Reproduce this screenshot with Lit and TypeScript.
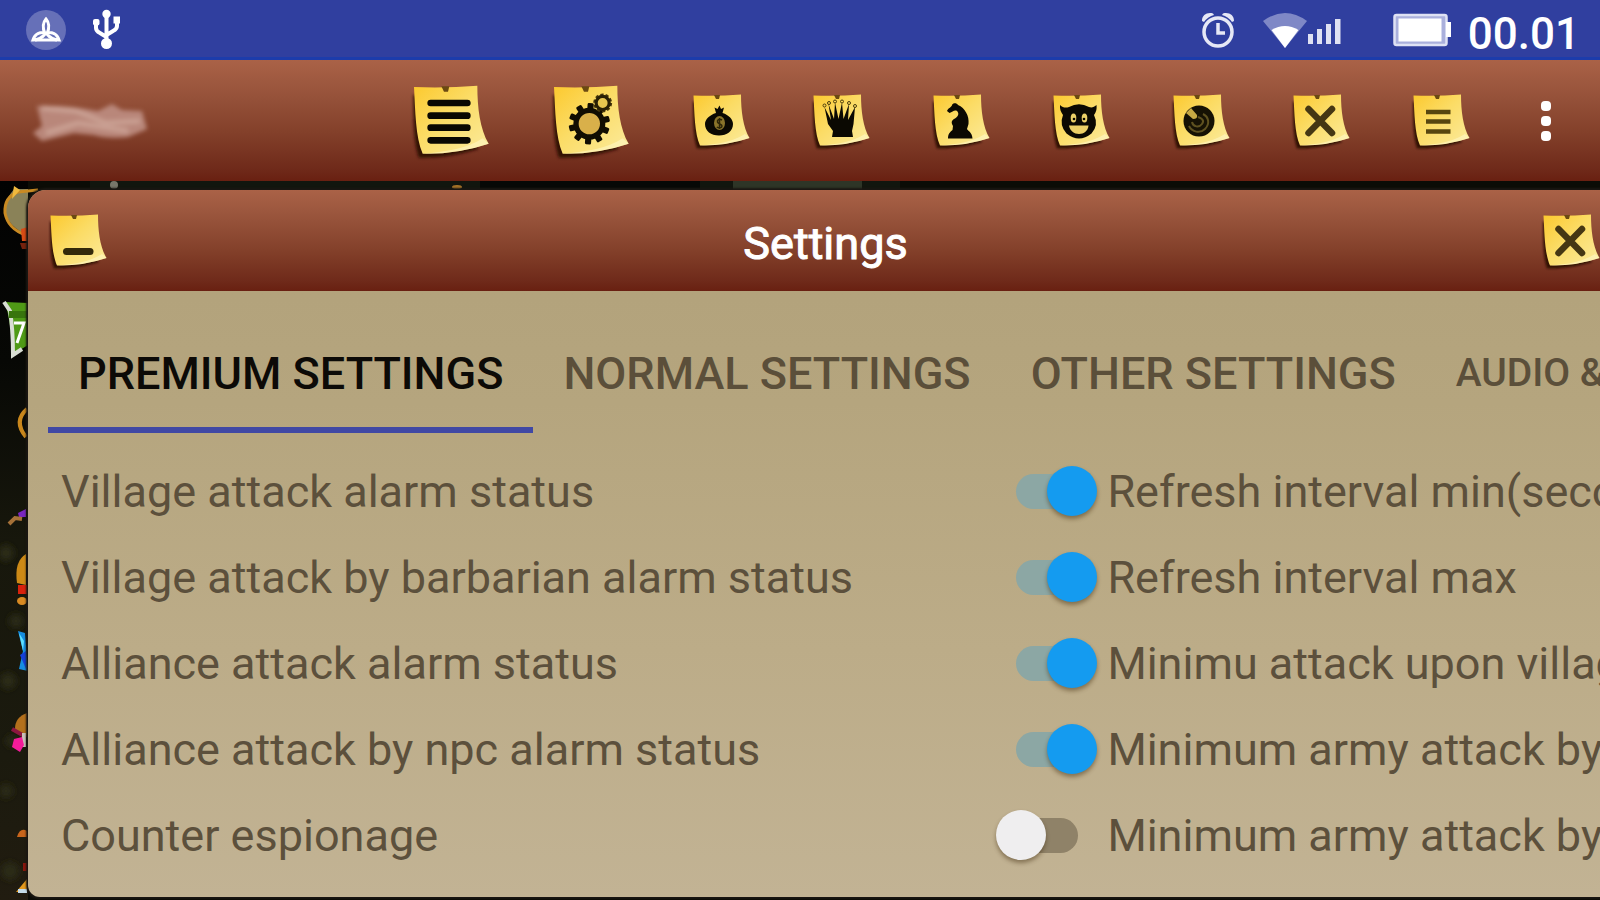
import { LitElement, html, svg, css } from "lit";
import { customElement, property, state } from "lit/decorators.js";

const teeth = (cx: number, cy: number, r: number, n: number, w: number) =>
  Array.from({ length: n }, (_, i) => svg`
    <rect x=${cx - w / 2} y=${cy - r} width=${w} height=${w} rx="1"
      transform="rotate(${(360 / n) * i + 4} ${cx} ${cy})"></rect>`);

const glyphs: Record<string, unknown> = {
  list: svg`<path d="M14 16.5H41.500M14 26H41.500M14 35H41.500M14 44.5H41.500" stroke="#0a0802" stroke-width="5" stroke-linecap="round"/>`,
  gears: svg`
    <g fill="#110d02">${teeth(28, 32, 15.5, 10, 4.6)}</g>
    <circle cx="28" cy="32" r="10" fill="#d9b04a" stroke="#110d02" stroke-width="4"/>
    <circle cx="38" cy="16.5" r="6.2" fill="none" stroke="#4a3a0c" stroke-width="1.800" stroke-dasharray="2.400 1.500"/>
    <circle cx="38" cy="16.5" r="4.900" fill="#e8c650" stroke="#2a2005" stroke-width="2.400"/>`,
  bag: svg`
    <path d="M24 22L22.500 16.500L25.500 18L27.500 14.500L29 18L32 16.500L30.500 22C37 24 41 28.500 41 33C41 40 35 44.500 27 44.500S13 40 13 33C13 28.500 17.500 24 24 22Z" fill="#0b0902"/>
    <ellipse cx="27.500" cy="32" rx="5.500" ry="7" fill="#8a742a"/>
    <path d="M30 29C27 27.500 25 29 25.500 31S30 33 30 35S27 37.500 24.800 36M27.500 27V38" fill="none" stroke="#2d2508" stroke-width="1.500"/>`,
  queen: svg`
    <path d="M20 46L21 40L16 33L12.500 16L19 29L16.500 13L22 28L23 11.500L26.500 28L30 11.500L31.500 28L37 13L36 29L43 16L41.500 33L40 40L41 46Z" fill="#0b0902"/>
    <g fill="none" stroke="#4a3c0c" stroke-width="1"><circle cx="12.500" cy="14.500" r="1.500"/><circle cx="17" cy="12" r="1.500"/><circle cx="23" cy="10.500" r="1.500"/><circle cx="30" cy="10.500" r="1.500"/><circle cx="37" cy="12" r="1.500"/><circle cx="43" cy="15" r="1.500"/></g>`,
  bishop: svg`<path d="M15 20C16 17 20 16 20 14C21 11.500 25 12 26 14C33 17 37.500 25 36.500 33L35 38C36 40 40 41 40.500 47.500H16C16 43 18 41 20.500 39L21 35C18.500 31 20 29 23 27.500C27 25 27 22 25 20C22 18.500 20.500 21.500 17.500 22Z" fill="#0b0902"/>`,
  devil: svg`
    <path d="M8 14C11 17 14 17 17 16Q27 10.500 37 16C40 17 42 16 44.500 14C45 19 44 21 42 24Q47 34 39.500 42.500Q27 52.500 14.500 42.500Q7 34 11 24C9 21 7.500 18 8 14Z" fill="#0b0902"/>
    <ellipse cx="21.500" cy="27" rx="2.800" ry="4.500" fill="#ecd067"/><ellipse cx="32.500" cy="27" rx="2.800" ry="4.500" fill="#ecd067"/>
    <circle cx="22" cy="28" r="1.300" fill="#0b0902"/><circle cx="32" cy="28" r="1.300" fill="#0b0902"/>
    <path d="M17 34.500H36.500C36 40 32 43 27 43S18 40 17 34.500Z" fill="#ecd067"/>`,
  ball: svg`
    <circle cx="27" cy="30" r="15.500" fill="#161204"/>
    <path d="M14 22L19 17L25 24Q26 28 21 28Z" fill="#c7a944"/>
    <path d="M17 35C20 41 28 43 33 38S37 26 31 23M20 31C21 36 27 37 30 33S29 27 26 26" fill="none" stroke="#5f5220" stroke-width="2"/>`,
  cross: svg`<path d="M16.500 18L40 42M40 18L16.500 42" stroke="#453713" stroke-width="6.500" stroke-linecap="round"/>`,
  lines: svg`<path d="M14 21H38.500M14 30.500H38.500M14 40.500H38.500" stroke="#57460f" stroke-width="4.500"/>`,
  minus: svg`<path d="M17.500 40.500H41" stroke="#33290a" stroke-width="7" stroke-linecap="round"/>`,
};

@customElement("sticky-note")
class StickyNote extends LitElement {
  @property() glyph = "lines";

  static styles = css`
    :host { display: block; aspect-ratio: 1; }
    .art { display: block; width: 100%; height: 100%; overflow: visible; }
  `;

  render() {
    return html`<svg class="art" viewBox="0 0 60 60" aria-hidden="true">
      <defs>
        <linearGradient id="paper" x1="0" y1="0" x2="1" y2="1">
          <stop offset="0" stop-color="#fcc92e"/><stop offset=".45" stop-color="#fbdc66"/><stop offset="1" stop-color="#fbeb9e"/>
        </linearGradient>
        <filter id="soft" x="-20%" y="-20%" width="140%" height="140%"><feGaussianBlur stdDeviation="1.200"/></filter>
      </defs>
      <path d="M1 10C1 30 1 46 5 57.500C20 58 34 55.500 50 51L30 30Z" fill="#2a0f06" opacity=".9" filter="url(#soft)"/>
      <path d="M1.500 4.500Q25 5.500 49 3.500C49 20 51 36 57.500 47Q34 55 8 54.500C2.500 42 2.500 22 1.500 4.500Z" fill="url(#paper)"/>
      <path d="M57.500 47Q34 55 8 54.500C24 53.500 42 50.500 53 43Z" fill="#fff6c4" opacity=".6"/>
      <path d="M22 4L28 4L27 8H24Z" fill="#6b4a12"/>
      ${glyphs[this.glyph]}
    </svg>`;
  }
}

const tools = [
  { glyph: "list", label: "Menu", big: true },
  { glyph: "gears", label: "Settings", big: true },
  { glyph: "bag", label: "Resources" },
  { glyph: "queen", label: "Alliance" },
  { glyph: "bishop", label: "Heroes" },
  { glyph: "devil", label: "Barbarians" },
  { glyph: "ball", label: "World" },
  { glyph: "cross", label: "Close" },
  { glyph: "lines", label: "Log" },
];

const tabs = [
  { text: "Premium settings" },
  { text: "Normal settings" },
  { text: "Other settings" },
  { text: "Audio & notifications", small: true },
];

@customElement("app-root")
class AppRoot extends LitElement {
  @state() private tab = 0;
  @state() private rows = [
    { label: "Village attack alarm status", on: true, next: "Refresh interval min(seconds)" },
    { label: "Village attack by barbarian alarm status", on: true, next: "Refresh interval max" },
    { label: "Alliance attack alarm status", on: true, next: "Minimu attack upon village" },
    { label: "Alliance attack by npc alarm status", on: true, next: "Minimum army attack by" },
    { label: "Counter espionage", on: false, next: "Minimum army attack by" },
  ];

  static styles = css`
    :host {
      display: flex; flex-direction: column; height: 100vh; overflow: hidden;
      background: #0b0c06; font-family: Roboto, "Liberation Sans", sans-serif;
      --wood: linear-gradient(#aa6247, #96523a 30%, #83402a 60%, #6f2a1a 90%, #692011);
    }
    * { box-sizing: border-box; }
    button { border: 0; padding: 0; margin: 0; background: none; font: inherit; color: inherit; cursor: pointer; }
    .status {
      flex: none; height: 60px; display: flex; align-items: center; padding: 0 20px 0 24px;
      background: #303f9f; border-bottom: 3px solid #1c3cab; color: #fff;
    }
    .status svg { display: block; flex: none; }
    .usb { margin-left: 24px; }
    .alarm { margin-left: auto; }
    .wifi { margin-left: 26px; }
    .battery { margin-left: 50px; }
    .clock { margin-left: 16px; font-size: 44px; line-height: 48px; font-weight: 500; padding-top: 10px; }
    .bar { flex: none; height: 121px; display: flex; align-items: center; padding: 0 10px 0 28px; background: var(--wood); }
    .smudge { margin-right: auto; overflow: visible; }
    .tool { width: 120px; height: 100%; display: grid; place-items: center; }
    .tool.big { width: 140px; }
    .note { width: 60px; }
    .big .note { width: 80px; }
    .more { width: 88px; height: 100%; display: grid; place-items: center; }
    .stage { flex: 1; min-height: 0; position: relative; display: flex; padding: 9px 0 3px 28px; }
    .scene { position: absolute; left: 0; top: 0; }
    .dialog {
      position: relative; flex: 1; margin-right: -20px; display: flex; flex-direction: column;
      border-radius: 18px 18px 12px 12px; overflow: hidden;
      background: linear-gradient(#b1a17a, #b5a57e 30%, #bcac88 65%, #c2b394);
      box-shadow: 0 0 2px 2px #1b1712;
    }
    .head { flex: none; height: 101px; display: grid; grid-template-columns: 60px 1fr 60px; align-items: center; padding: 0 18px 0 21px; background: var(--wood); }
    .title { margin: 0; padding-top: 6px; text-align: center; color: #fff; font-size: 45px; line-height: 52px; font-weight: 400; -webkit-text-stroke: 1px #fff; }
    .tabs { flex: none; display: flex; padding: 28px 0 0 20px; }
    .tab { flex: none; height: 114px; padding: 0 30px; border-bottom: 6px solid transparent; font-size: 45px; font-weight: 500; color: #5b4f3a; text-transform: uppercase; white-space: nowrap; }
    .tab.small { font-size: 39px; }
    .tab.current { color: #0c0a07; border-color: #4048a4; }
    .list { margin: 0; padding: 15px 0 0 33px; list-style: none; }
    .row { display: grid; grid-template-columns: 60% 111px 1fr; align-items: center; height: 86px; font-size: 45px; line-height: 52px; color: #5c503c; white-space: nowrap; }
    .row label, .row span { padding-top: 2px; }
    .switch { appearance: none; margin: 0; width: 101px; height: 50px; display: grid; align-items: center; cursor: pointer; }
    .switch::before { content: ""; grid-area: 1 / 1; justify-self: center; width: 62px; height: 35px; border-radius: 18px; background: #8f8268; }
    .switch::after { content: ""; grid-area: 1 / 1; justify-self: start; width: 50px; height: 50px; border-radius: 50%; background: #efeeef; box-shadow: 0 3px 4px rgba(60, 40, 10, .45); }
    .switch:checked::before { background: #8ca7a4; }
    .switch:checked::after { justify-self: end; background: #149bf0; }
  `;

  private toggle(i: number) {
    this.rows = this.rows.map((r, n) => (n === i ? { ...r, on: !r.on } : r));
  }

  render() {
    return html`
      <header class="status">
        <svg width="44" height="44" viewBox="0 0 44 44" aria-hidden="true">
          <circle cx="22" cy="23" r="20" fill="#6670b8"/>
          <g fill="none" stroke="#fff" stroke-width="3">
            <path d="M22 12C25.500 16 26 20 23 27C26 31 31 33 35 33C33 27 28 24.500 22 26C16 24.500 11 27 9 33C13 33 18 31 21 27C18 20 18.500 16 22 12Z"/>
            <path d="M11 33H33"/>
          </g>
        </svg>
        <svg class="usb" width="28" height="44" viewBox="0 0 28 44" aria-hidden="true">
          <g fill="none" stroke="#fff" stroke-width="4">
            <path d="M14.500 8V38M4 15V21Q4 24 8 26L14.500 30M25 13V19Q25 22 21 24L14.500 28"/>
          </g>
          <circle cx="14.500" cy="7" r="4.200" fill="#fff"/>
          <rect x="1" y="12" width="6.500" height="6.500" rx="2" fill="#fff"/><rect x="21.500" y="9.500" width="6.500" height="7" fill="#fff"/>
          <circle cx="14.500" cy="36.500" r="5.500" fill="#fff"/>
        </svg>
        <svg class="alarm" width="36" height="40" viewBox="0 0 36 40" aria-hidden="true">
          <g fill="none" stroke="#e6e8f6">
            <circle cx="18" cy="23" r="14" stroke-width="3.500"/><path d="M18 14V24H25" stroke-width="3.500"/>
          </g>
          <path d="M2 12C2 6 7 3 13 4.500L14 6Q8 7.500 4 13ZM34 12C34 6 29 3 23 4.500L22 6Q28 7.500 32 13Z" fill="#e6e8f6"/>
        </svg>
        <svg class="wifi" width="80" height="40" viewBox="0 0 80 40" aria-hidden="true">
          <path d="M1 12Q23 -4 45 12L23 39Z" fill="#7f88c6"/>
          <path d="M9.500 21Q23 13 36.500 21L23 39Z" fill="#fff"/>
          <g fill="#dfe1f2"><rect x="46" y="25" width="5" height="10"/><rect x="55" y="20" width="5" height="15"/><rect x="64" y="15" width="5" height="20"/><rect x="73" y="10" width="5.500" height="25"/></g>
        </svg>
        <svg class="battery" width="60" height="36" viewBox="0 0 60 36" aria-hidden="true">
          <rect x="2.500" y="4" width="52" height="30" rx="2" fill="#aab0dc" stroke="#dfe2f4" stroke-width="2.500"/>
          <rect x="6.500" y="7.500" width="43" height="23" fill="#fff"/><rect x="54" y="11" width="5" height="15" fill="#fff"/>
        </svg>
        <time class="clock">00.01</time>
      </header>
      <nav class="bar">
        <svg class="smudge" width="124" height="44" viewBox="0 0 124 44" aria-hidden="true">
          <defs><filter id="smear"><feGaussianBlur stdDeviation="2.200"/></filter></defs>
          <g filter="url(#smear)">
            <path d="M9 7Q40 6 70 12L84 5L94 11L114 12L119 30L100 38Q80 40 66 36L46 34L14 42L5 34L14 27Z" fill="#b9877a"/>
            <path d="M14 9L48 12L78 24L112 22M18 34L50 24L100 32" fill="none" stroke="#c99f92" stroke-width="5"/>
          </g>
        </svg>
        ${tools.map((t) => html`
          <button class="tool ${t.big ? "big" : ""}" aria-label=${t.label}>
            <sticky-note class="note" glyph=${t.glyph}></sticky-note>
          </button>`)}
        <button class="more" aria-label="More options">
          <svg width="12" height="44" viewBox="0 0 12 44" fill="#fff" aria-hidden="true">
            <rect x="1" y="2" width="10" height="10" rx="4"/><rect x="1" y="17" width="10" height="10" rx="4"/><rect x="1" y="32" width="10" height="10" rx="4"/>
          </svg>
        </button>
      </nav>
      <main class="stage">
        <svg class="scene" width="900" height="719" viewBox="0 0 900 719" aria-hidden="true">
          <defs>
            <linearGradient id="ground" x1="0" y1="0" x2="0" y2="1">
              <stop offset="0" stop-color="#020202"/><stop offset=".25" stop-color="#070805"/><stop offset=".5" stop-color="#17170c"/><stop offset=".8" stop-color="#1b1a0e"/><stop offset="1" stop-color="#211c10"/>
            </linearGradient>
            <filter id="haze"><feGaussianBlur stdDeviation="3"/></filter>
            <filter id="fine"><feGaussianBlur stdDeviation="0.600"/></filter>
          </defs>
          <rect width="28" height="719" fill="url(#ground)"/>
          <path d="M90 0H900V9H90Z" fill="#12160e"/>
          <path d="M733 0H862V9H733Z" fill="#2e3527"/>
          <rect x="480" y="0" width="220" height="9" fill="#060806"/>
          <ellipse cx="457" cy="6" rx="5" ry="2" fill="#a87428"/><ellipse cx="114" cy="4" rx="4" ry="4" fill="#77776a"/>
          <g filter="url(#haze)" fill="#2b2b14">
            <circle cx="6" cy="372" r="8"/><circle cx="16" cy="440" r="7"/><circle cx="8" cy="500" r="8"/><circle cx="12" cy="560" r="6"/><circle cx="6" cy="610" r="7"/><circle cx="10" cy="690" r="9"/>
          </g>
          <g filter="url(#fine)">
            <path d="M28 8L14 8Q4 20 5 30Q8 46 28 54Z" fill="#8a8258"/>
            <path d="M38 9L18 11Q4 16 5 32Q8 48 26 54" fill="none" stroke="#c98a24" stroke-width="3"/>
            <path d="M14 5L20 9L12 18Z" fill="#f0b93c"/><path d="M21 48L28 46V60H22Z" fill="#d84b18"/><path d="M20 62H27V68H22Z" fill="#762410"/>
            <path d="M5 121L28 122V164L12 174Q12 145 5 121Z" fill="#4f9a18"/>
            <path d="M4 121L10 130Q13 148 13 174L22 168" fill="none" stroke="#d9ded4" stroke-width="4"/>
            <path d="M14 142H24L17 162" fill="none" stroke="#fff" stroke-width="3"/><rect x="9" y="130" width="18" height="7" fill="#39740f"/>
            <path d="M27 228Q13 240 26 256" fill="none" stroke="#c9871c" stroke-width="4"/>
            <path d="M18 332L26 328V336H19Z" fill="#7a27c0"/><path d="M9 343L15 337L22 338" fill="none" stroke="#a57138" stroke-width="4"/>
            <path d="M26 373Q14 380 17 402L26 404Z" fill="#cd8a18"/><rect x="18" y="404" width="9" height="9" fill="#d8200c"/><ellipse cx="22" cy="420" rx="5" ry="4" fill="#d98a24"/>
            <path d="M18 450L25 452L28 490L19 488L23 470Z" fill="#168de0"/><path d="M19 452L24 460L23 470Z" fill="#5fe0ff"/><path d="M20 474L26 470V488Z" fill="#1440d8"/>
            <path d="M27 532Q15 536 15 548L27 556Z" fill="#b4701c"/><path d="M12 548L26 556" stroke="#8c1740" stroke-width="4"/><path d="M24 552V566" stroke="#c8c0b8" stroke-width="4"/><path d="M14 558L22 556L24 564L20 571L12 566Z" fill="#f41c9a"/>
            <path d="M17 656Q20 646 27 650V656Z" fill="#c8651c"/><rect x="23" y="682" width="4" height="8" fill="#8a1410"/>
            <path d="M27 698L16 711H27Z" fill="#e59a1c"/><rect x="18" y="708" width="9" height="4" fill="#c4dbe8"/>
          </g>
        </svg>
        <section class="dialog" aria-labelledby="title">
          <div class="head">
            <button aria-label="Minimize"><sticky-note class="note" glyph="minus"></sticky-note></button>
            <h1 class="title" id="title">Settings</h1>
            <button aria-label="Close settings"><sticky-note class="note" glyph="cross"></sticky-note></button>
          </div>
          <div class="tabs" role="tablist">
            ${tabs.map((t, i) => html`
              <button role="tab" aria-selected=${this.tab === i ? "true" : "false"}
                class="tab ${t.small ? "small" : ""} ${this.tab === i ? "current" : ""}"
                @click=${() => (this.tab = i)}>${t.text}</button>`)}
          </div>
          <ul class="list">
            ${this.rows.map((r, i) => html`
              <li class="row">
                <label for="switch-${i}">${r.label}</label>
                <input class="switch" id="switch-${i}" type="checkbox" role="switch" .checked=${r.on} @change=${() => this.toggle(i)}>
                <span>${r.next}</span>
              </li>`)}
          </ul>
        </section>
      </main>`;
  }
}
